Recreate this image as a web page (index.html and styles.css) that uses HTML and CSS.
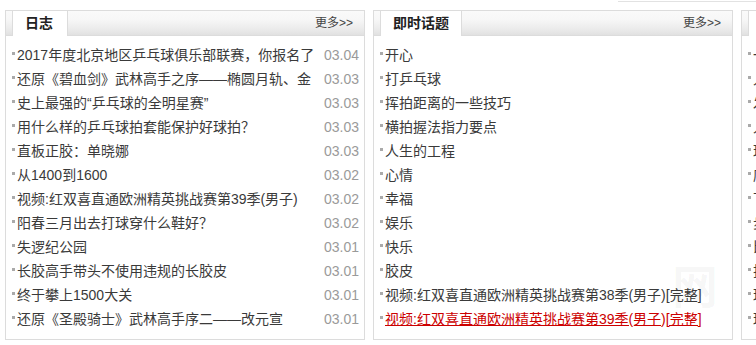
FILE: index.html
```html
<!DOCTYPE html>
<html lang="zh-CN">
<head>
    <meta charset="UTF-8">
    <title>日志 / 即时话题</title>
    <link rel="stylesheet" href="styles.css">
</head>
<body>
    <div class="topline"><span></span></div>

    <div class="columns">
        <div class="box">
            <div class="box-hd">
                <h3 class="tab">日志</h3>
                <a class="more" href="#">更多&gt;&gt;</a>
            </div>
            <ul class="list">
                <li><a class="title" href="#">2017年度北京地区乒乓球俱乐部联赛，你报名了</a><span class="date">03.04</span></li>
                <li><a class="title" href="#">还原《碧血剑》武林高手之序——椭圆月轨、金</a><span class="date">03.03</span></li>
                <li><a class="title" href="#">史上最强的“乒乓球的全明星赛”</a><span class="date">03.03</span></li>
                <li><a class="title" href="#">用什么样的乒乓球拍套能保护好球拍？</a><span class="date">03.03</span></li>
                <li><a class="title" href="#">直板正胶：单晓娜</a><span class="date">03.03</span></li>
                <li><a class="title" href="#">从1400到1600</a><span class="date">03.02</span></li>
                <li><a class="title" href="#">视频:红双喜直通欧洲精英挑战赛第39季(男子)</a><span class="date">03.02</span></li>
                <li><a class="title" href="#">阳春三月出去打球穿什么鞋好？</a><span class="date">03.02</span></li>
                <li><a class="title" href="#">失逻纪公园</a><span class="date">03.01</span></li>
                <li><a class="title" href="#">长胶高手带头不使用违规的长胶皮</a><span class="date">03.01</span></li>
                <li><a class="title" href="#">终于攀上1500大关</a><span class="date">03.01</span></li>
                <li><a class="title" href="#">还原《圣殿骑士》武林高手序二——改元宣</a><span class="date">03.01</span></li>
            </ul>
        </div>

        <div class="box">
            <div class="box-hd">
                <h3 class="tab">即时话题</h3>
                <a class="more" href="#">更多&gt;&gt;</a>
            </div>
            <ul class="list">
                <li><a class="title" href="#">开心</a></li>
                <li><a class="title" href="#">打乒乓球</a></li>
                <li><a class="title" href="#">挥拍距离的一些技巧</a></li>
                <li><a class="title" href="#">横拍握法指力要点</a></li>
                <li><a class="title" href="#">人生的工程</a></li>
                <li><a class="title" href="#">心情</a></li>
                <li><a class="title" href="#">幸福</a></li>
                <li><a class="title" href="#">娱乐</a></li>
                <li><a class="title" href="#">快乐</a></li>
                <li><a class="title" href="#">胶皮</a></li>
                <li><a class="title" href="#">视频:红双喜直通欧洲精英挑战赛第38季(男子)[完整]</a></li>
                <li><a class="title active" href="#">视频:红双喜直通欧洲精英挑战赛第39季(男子)[完整]</a></li>
            </ul>
        </div>

        <div class="box">
            <div class="box-hd">
                <h3 class="tab"></h3>
            </div>
            <ul class="list">
                <li><a class="title" href="#">一路走来</a></li>
                <li><a class="title" href="#">入门技术</a></li>
                <li><a class="title" href="#">发球练习</a></li>
                <li><a class="title" href="#">入门器材</a></li>
                <li><a class="title" href="#">球拍保养</a></li>
                <li><a class="title" href="#">底板选择</a></li>
                <li><a class="title" href="#">下旋球</a></li>
                <li><a class="title" href="#">步法训练</a></li>
                <li><a class="title" href="#">比赛心得</a></li>
                <li><a class="title" href="#">技术交流</a></li>
                <li><a class="title" href="#">球友活动</a></li>
                <li><a class="title" href="#">球馆推荐</a></li>
            </ul>
        </div>
    </div>

    <div class="watermark">网</div>
</body>
</html>
```

FILE: styles.css
```css
body {
    margin: 0;
    width: 756px;
    height: 345px;
    overflow: hidden;
    position: relative;
    font-family: "Liberation Sans", "Noto Sans CJK SC", sans-serif;
    font-size: 14px;
    color: #3a3a3a;
    background: #fff;
}
a { color: #3a3a3a; text-decoration: none; }
ul { list-style: none; margin: 0; padding: 0; }
h3 { margin: 0; }

.topline {
    height: 2px;
    margin-bottom: 8px;
}
.topline span {
    display: block;
    margin-left: 618px;
    height: 1px;
    border-bottom: 1px solid #e2e2e2;
}

.columns {
    display: flex;
    gap: 8px;
    padding-left: 5px;
    width: 1200px;
}
.box {
    flex: none;
    width: 360px;
    height: 330px;
    box-sizing: border-box;
    border: 1px solid #dcdcdc;
}
.box-hd {
    display: flex;
    height: 25px;
    box-sizing: border-box;
    padding-left: 6px;
    border-bottom: 1px solid #dcdcdc;
    background: linear-gradient(#fafafa, #f7f7f7 35%, #ebebeb 75%, #e1e1e1);
}
.tab {
    min-width: 30px;
    padding: 0 12px;
    margin-bottom: -1px;
    line-height: 25px;
    font-size: 14px;
    font-weight: bold;
    color: #222;
    background: #fff;
    border-left: 1px solid #dcdcdc;
    border-right: 1px solid #dcdcdc;
}
.more {
    margin-left: auto;
    padding-right: 11px;
    font-size: 12px;
    line-height: 25px;
    color: #444;
}

.list {
    padding: 7px 5px 0 6px;
}
.list li {
    display: flex;
    align-items: center;
    height: 24px;
    line-height: 24px;
}
.list li::before {
    content: "";
    flex: none;
    width: 3px;
    height: 3px;
    margin: 0 2px 4px 0;
    background: #aaa;
}
.title {
    flex: 1;
    min-width: 0;
    overflow: hidden;
    white-space: nowrap;
}
.title.active {
    color: #c00;
    text-decoration: underline;
}
.date {
    flex: none;
    padding-left: 8px;
    color: #9a9a9a;
}

.watermark {
    position: absolute;
    left: 672px;
    top: 262px;
    font-size: 46px;
    font-weight: bold;
    line-height: 50px;
    color: rgba(0, 0, 0, 0.05);
    pointer-events: none;
}
```
